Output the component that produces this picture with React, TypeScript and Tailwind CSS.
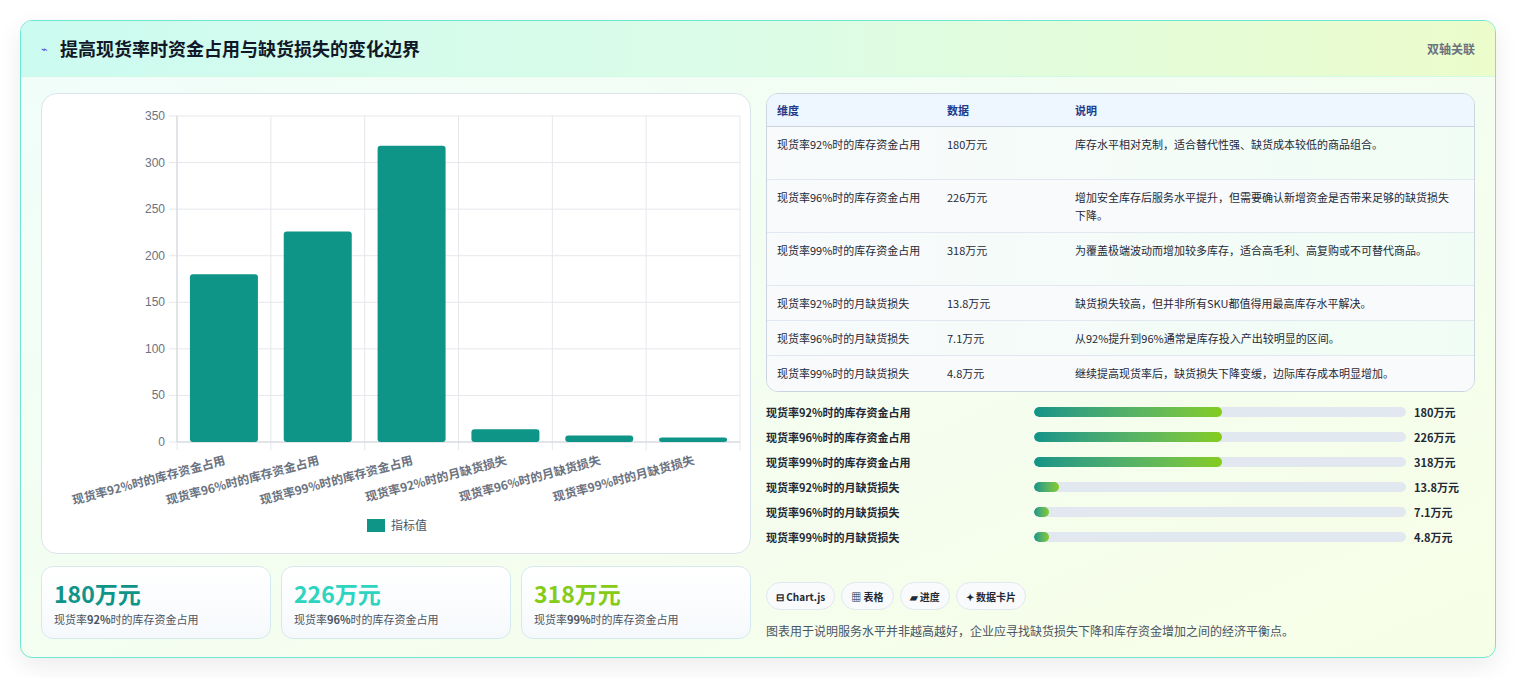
const F = { fontFamily: '"Noto Sans CJK SC", "Noto Sans", sans-serif' };

const cats = [
  { label: '现货率92%时的库存资金占用', v: 180 },
  { label: '现货率96%时的库存资金占用', v: 226 },
  { label: '现货率99%时的库存资金占用', v: 318 },
  { label: '现货率92%时的月缺货损失', v: 13.8 },
  { label: '现货率96%时的月缺货损失', v: 7.1 },
  { label: '现货率99%时的月缺货损失', v: 4.8 },
];

const rows = [
  ['现货率92%时的库存资金占用', '180万元', '库存水平相对克制，适合替代性强、缺货成本较低的商品组合。'],
  ['现货率96%时的库存资金占用', '226万元', '增加安全库存后服务水平提升，但需要确认新增资金是否带来足够的缺货损失下降。'],
  ['现货率99%时的库存资金占用', '318万元', '为覆盖极端波动而增加较多库存，适合高毛利、高复购或不可替代商品。'],
  ['现货率92%时的月缺货损失', '13.8万元', '缺货损失较高，但并非所有SKU都值得用最高库存水平解决。'],
  ['现货率96%时的月缺货损失', '7.1万元', '从92%提升到96%通常是库存投入产出较明显的区间。'],
  ['现货率99%时的月缺货损失', '4.8万元', '继续提高现货率后，缺货损失下降变缓，边际库存成本明显增加。'],
];

const bars = [
  { label: '现货率92%时的库存资金占用', v: '180万元', w: 188 },
  { label: '现货率96%时的库存资金占用', v: '226万元', w: 188 },
  { label: '现货率99%时的库存资金占用', v: '318万元', w: 188 },
  { label: '现货率92%时的月缺货损失', v: '13.8万元', w: 25 },
  { label: '现货率96%时的月缺货损失', v: '7.1万元', w: 15 },
  { label: '现货率99%时的月缺货损失', v: '4.8万元', w: 15 },
];

function Chart() {
  const L = 135, R = 698, T = 22, B = 348;
  const step = (R - L) / 6;
  const y = (v: number) => B - (v / 350) * (B - T);
  return (
    <svg width="710" height="460" className="block">
      {[0, 50, 100, 150, 200, 250, 300, 350].map((t) => (
        <g key={t}>
          <line x1={L - 8} x2={R} y1={y(t)} y2={y(t)} stroke="#e5e7eb" />
          <text x={L - 12} y={y(t) + 4} textAnchor="end" fontSize="12" fill="#6b7280" fontFamily="Liberation Sans, sans-serif">{t}</text>
        </g>
      ))}
      {[0, 1, 2, 3, 4, 5, 6].map((i) => (
        <line key={i} x1={L + i * step} x2={L + i * step} y1={T} y2={B + 8} stroke="#e5e7eb" />
      ))}
      <line x1={L} x2={L} y1={T} y2={B} stroke="#d1d5db" />
      <line x1={L} x2={R} y1={B} y2={B} stroke="#d1d5db" />
      {cats.map((c, i) => {
        const cx = L + step * i + step / 2;
        return (
          <g key={i}>
            <rect x={cx - 34} y={y(c.v)} width="68" height={B - y(c.v)} rx="3" fill="#0f9488" />
            <text x={cx + 2} y={B + 22} textAnchor="end" fontSize="12" fontWeight="700" fill="#6b7280" transform={`rotate(-15 ${cx + 2} ${B + 22})`} style={F}>{c.label}</text>
          </g>
        );
      })}
      <rect x="325" y="425" width="18" height="13" fill="#0f9488" />
      <text x="349" y="436" fontSize="12" fill="#4b5563" style={F}>指标值</text>
    </svg>
  );
}

export default function App() {
  return (
    <div className="w-[1516px] h-[678px] bg-white pt-5 px-5" style={F}>
      <div className="w-[1476px] h-[638px] rounded-xl border border-[#6ee7d2] bg-gradient-to-br from-[#f0fdfa] to-[#f7fee7] overflow-hidden shadow-[0_8px_24px_rgba(0,0,0,0.08)]">
        <div className="h-[56px] flex items-center justify-between px-5 bg-gradient-to-r from-[#ccfbf1] via-[#dcfce7] to-[#ecfccb] border-b border-[#d1fae5]">
          <div className="flex items-center gap-3">
            <span className="text-[11px] text-[#4f46e5]">⌁</span>
            <h1 className="text-[18px] font-bold text-[#111827]">提高现货率时资金占用与缺货损失的变化边界</h1>
          </div>
          <span className="text-[12px] font-semibold text-[#6b7280]">双轴关联</span>
        </div>
        <div className="flex gap-[15px] px-5 pt-4">
          <div className="w-[710px] flex flex-col gap-3">
            <div className="h-[461px] rounded-2xl border border-[#dbe4ea] bg-white overflow-hidden">
              <Chart />
            </div>
            <div className="grid grid-cols-3 gap-[10px]">
              {[
                ['180万元', 'text-[#0f9488]', '92%'],
                ['226万元', 'text-[#2dd4bf]', '96%'],
                ['318万元', 'text-[#84cc16]', '99%'],
              ].map(([v, c, p]) => (
                <div key={v} className="h-[73px] rounded-xl border border-[#d6e9ee] bg-gradient-to-b from-white to-[#f6f9fc] px-3 pt-3">
                  <div className={`text-[23px] leading-7 font-bold ${c}`}>{v}</div>
                  <div className="text-[11px] text-[#4b5563] mt-1">现货率<b>{p}</b>时的库存资金占用</div>
                </div>
              ))}
            </div>
          </div>
          <div className="w-[711px] flex flex-col">
            <div className="rounded-xl border border-[#cbd5e1] overflow-hidden bg-gradient-to-r from-[#f8fafc] to-[#f0fdf4]">
              <div className="h-[33px] flex items-center bg-[#eef6ff] border-b border-[#cbd5e1] text-[11px] font-semibold text-[#1e3a8a]">
                <div className="w-[180px] pl-[10px]">维度</div>
                <div className="w-[128px]">数据</div>
                <div className="flex-1">说明</div>
              </div>
              {rows.map((r, i) => (
                <div key={i} className={`flex text-[11px] leading-[18px] text-[#1f2937] py-[8px] border-b last:border-b-0 border-[#e2e8f0] ${i < 3 ? 'h-[53px]' : 'h-[35px]'} ${i % 2 ? 'bg-[#f8fafc]' : ''}`}>
                  <div className="w-[180px] pl-[10px] pr-2">{r[0]}</div>
                  <div className="w-[128px]">{r[1]}</div>
                  <div className="flex-1 pr-4">{r[2]}</div>
                </div>
              ))}
            </div>
            <div className="mt-[11px] flex flex-col gap-[7px]">
              {bars.map((b) => (
                <div key={b.label} className="flex items-center h-[18px] text-[11px] font-semibold text-[#1f2937]">
                  <div className="w-[268px]">{b.label}</div>
                  <div className="w-[372px] h-[10px] rounded-full bg-[#e2e8f0] overflow-hidden">
                    <div className="h-full rounded-full bg-gradient-to-r from-[#0f9488] to-[#84cc16]" style={{ width: b.w }} />
                  </div>
                  <div className="ml-2">{b.v}</div>
                </div>
              ))}
            </div>
            <div className="flex gap-[6px] mt-[36px] text-[10px] font-semibold text-[#1f2937]">
              {['⊟ Chart.js', '▦ 表格', '▰ 进度', '✦ 数据卡片'].map((t) => (
                <span key={t} className="h-[28px] px-[9px] flex items-center rounded-full border border-[#e2e8f0] bg-[#f8fafc]">{t}</span>
              ))}
            </div>
            <p className="mt-[12px] text-[12px] text-[#4b5563]">图表用于说明服务水平并非越高越好，企业应寻找缺货损失下降和库存资金增加之间的经济平衡点。</p>
          </div>
        </div>
      </div>
    </div>
  );
}
